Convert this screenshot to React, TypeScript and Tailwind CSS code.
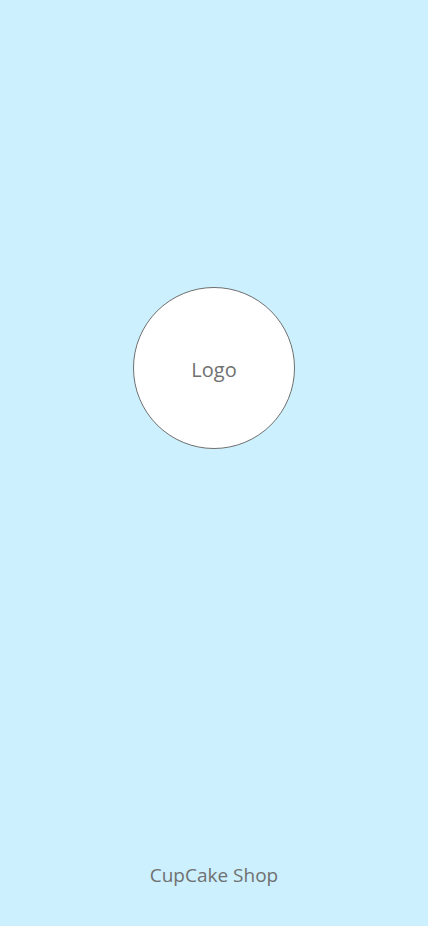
export default function App(): JSX.Element {
  return (
    <div
      className="flex h-[926px] flex-col items-center bg-[#ccf0fe] text-[#707070]"
      style={{ fontFamily: '"Open Sans", "Noto Sans", sans-serif' }}
    >
      <div className="mt-[287px] flex h-[162px] w-[162px] items-center justify-center rounded-full border border-[#6f6f6f] bg-white pt-[3px]">
        <span className="text-[20px] leading-none">Logo</span>
      </div>
      <footer className="mt-auto mb-[41px] text-[19px] leading-none">CupCake Shop</footer>
    </div>
  );
}
